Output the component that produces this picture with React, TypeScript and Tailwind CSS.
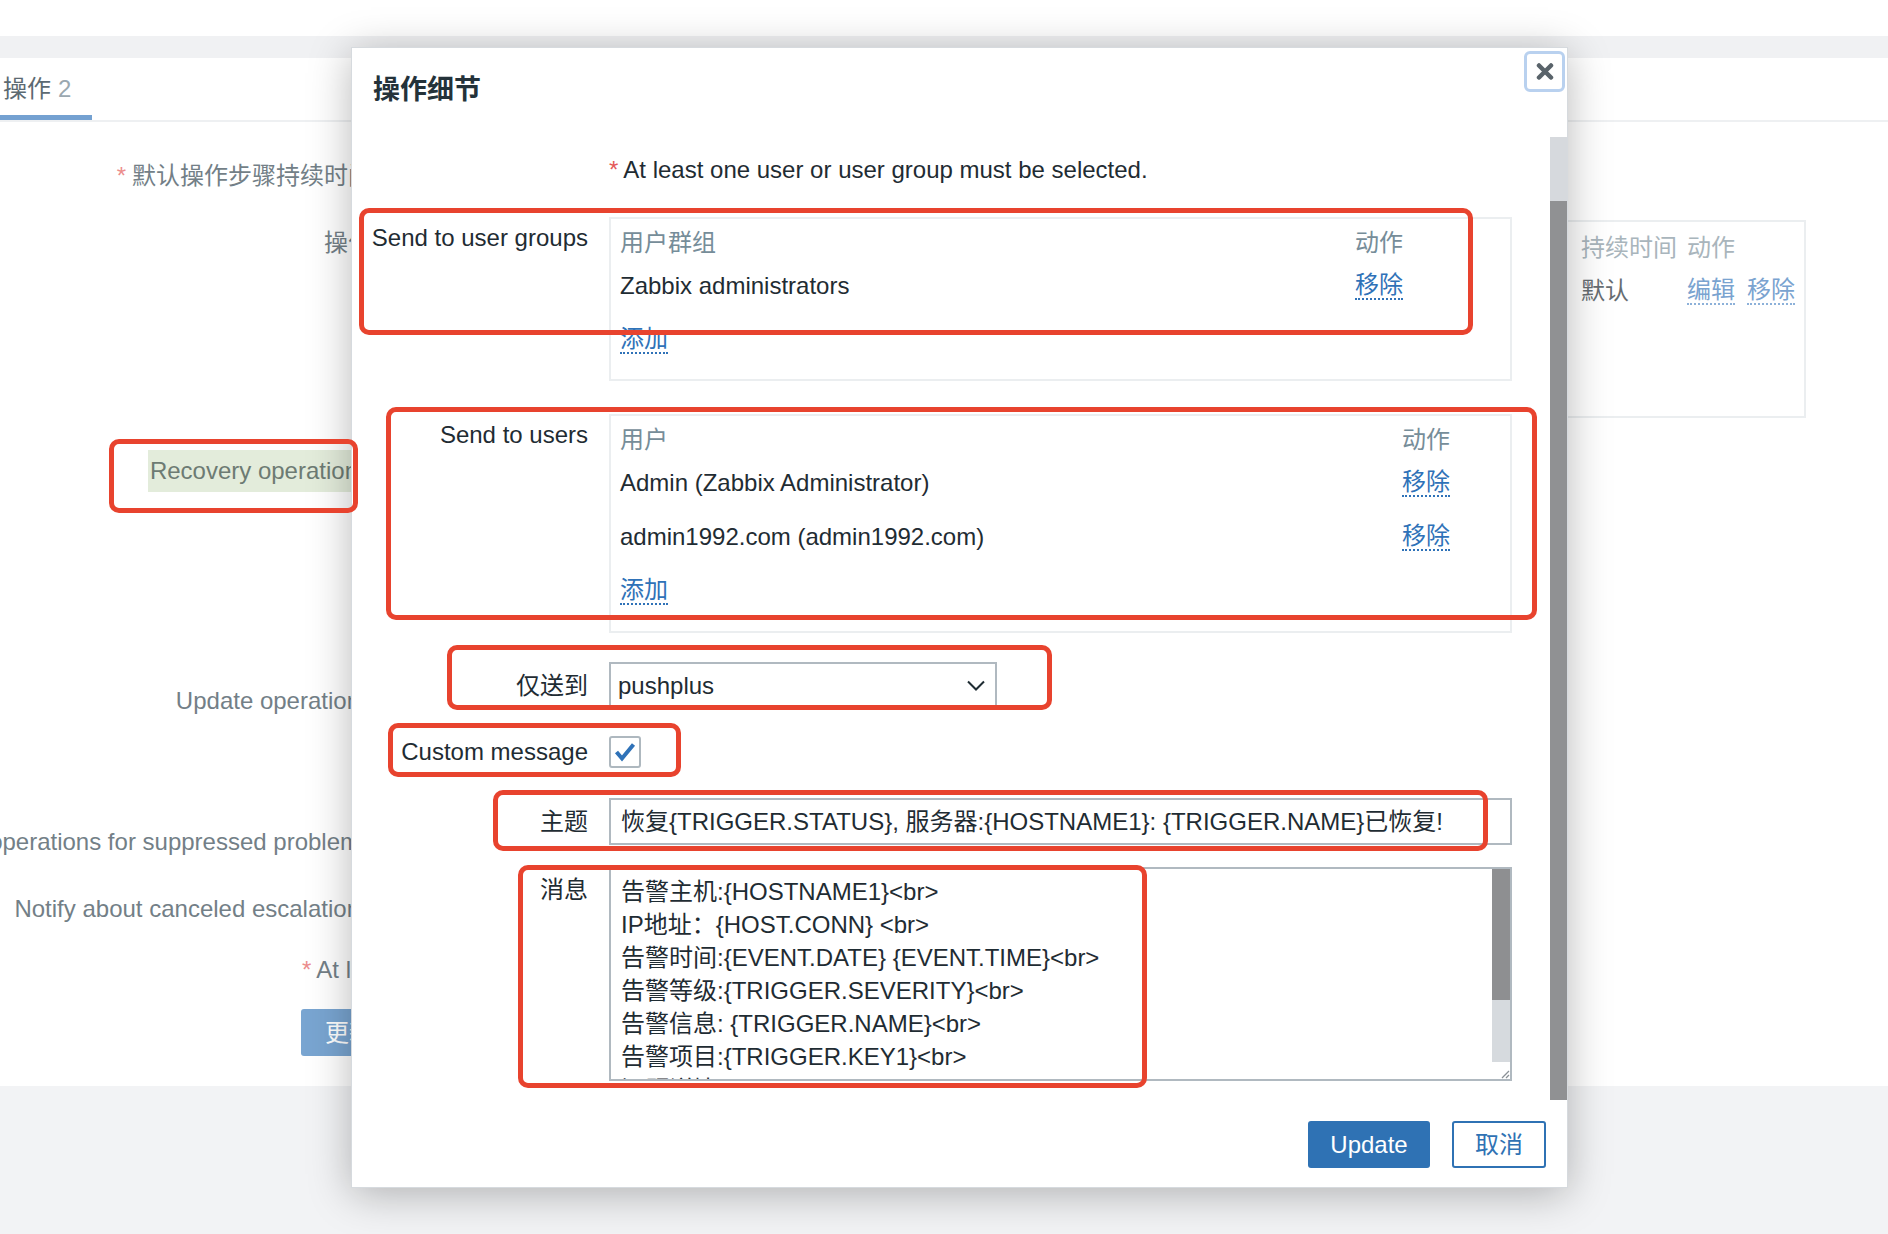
import type { ReactNode } from "react";

type Row = { name: string };

function DottedLink({ children, className = "" }: { children: ReactNode; className?: string }) {
  return (
    <span
      className={`inline-block border-b-2 border-dotted border-[#2f72b8] leading-[26px] text-[#2f72b8] ${className}`}
    >
      {children}
    </span>
  );
}

function FormRow({
  label,
  children,
  className = "",
  labelClass = "",
}: {
  label?: ReactNode;
  children: ReactNode;
  className?: string;
  labelClass?: string;
}) {
  return (
    <div className={`flex ${className}`}>
      <div className={`flex w-[216px] shrink-0 justify-end whitespace-nowrap ${labelClass}`}>{label}</div>
      <div className="ml-[21px] w-[903px]">{children}</div>
    </div>
  );
}

function UserTable({
  title,
  rows,
  nameWidth,
  bottomPad,
}: {
  title: string;
  rows: Row[];
  nameWidth: string;
  bottomPad: string;
}) {
  return (
    <div className={`border-2 border-[#ebeef0] px-[9px] pt-[7px] ${bottomPad}`}>
      <div className="flex h-[33px] items-center text-[#768d99]">
        <div className={nameWidth}>{title}</div>
        <div>动作</div>
      </div>
      {rows.map((row) => (
        <div key={row.name} className="flex h-[54px] items-center text-[#1f2c33]">
          <div className={nameWidth}>{row.name}</div>
          <DottedLink>移除</DottedLink>
        </div>
      ))}
      <div className="flex h-[54px] items-center">
        <DottedLink>添加</DottedLink>
      </div>
    </div>
  );
}

function Background() {
  return (
    <div className="flex h-full flex-col">
      <div className="h-[36px] shrink-0 bg-white" />
      <div className="h-[22px] shrink-0 bg-[#f0f1f3]" />
      <div className="h-[1028px] shrink-0 bg-white text-[#737f87]">
        <div className="flex h-[64px] border-b-2 border-[#eef0f2]">
          <div className="-ml-[18px] flex h-[62px] items-center whitespace-nowrap border-b-[5px] border-[#74a1d1] px-[21px] pt-[4px] text-[#5c6a72]">
            操作<span className="ml-[7px] text-[#9ba8b0]">2</span>
          </div>
        </div>

        <div className="flex flex-col">
          <div className="mt-[40px] flex w-[372px] justify-end whitespace-nowrap">
            <span className="mr-[6px] text-[#ec8d8d]">*</span>默认操作步骤持续时间
          </div>

          <div className="mt-[30px] flex">
            <div className="flex w-[372px] justify-end pt-[9px]">操作</div>
            <div className="ml-[20px] h-[198px] w-[1414px] border-2 border-[#ebeef0] pt-[12px]">
              <div className="flex justify-end">
                <div className="w-[106px] text-[#a9b5bc]">持续时间</div>
                <div className="w-[117px] text-[#a9b5bc]">动作</div>
              </div>
              <div className="mt-[15px] flex justify-end">
                <div className="w-[106px] text-[#666d72]">默认</div>
                <div className="flex w-[117px] gap-[12px]">
                  <span className="inline-block border-b-2 border-dotted border-[#8db1d9] leading-[26px] text-[#7aa3d0]">编辑</span>
                  <span className="inline-block border-b-2 border-dotted border-[#8db1d9] leading-[26px] text-[#7aa3d0]">移除</span>
                </div>
              </div>
            </div>
          </div>

          <div className="mt-[32px] flex w-[372px] justify-end whitespace-nowrap">
            <span className="bg-[#e3ecdb] px-[2px] py-[7px] text-[#6d7b73]">Recovery operations</span>
          </div>

          <div className="mt-[195px] flex w-[372px] justify-end whitespace-nowrap">Update operations</div>
          <div className="mt-[113px] flex w-[372px] justify-end whitespace-nowrap">
            Pause operations for suppressed problems
          </div>
          <div className="mt-[39px] flex w-[372px] justify-end whitespace-nowrap">
            Notify about canceled escalations
          </div>
          <div className="mt-[33px] whitespace-nowrap pl-[302px]">
            <span className="mr-[5px] text-[#ec8d8d]">*</span>At least one operation must exist.
          </div>
          <div className="mt-[25px] pl-[301px]">
            <button type="button" className="h-[47px] rounded-[3px] bg-[#79a5d1] px-[24px] text-white">
              更新
            </button>
          </div>
        </div>
      </div>
      <div className="flex-1 bg-[#f2f3f5]" />
    </div>
  );
}

function OperationModal() {
  return (
    <div className="absolute left-[351px] top-[47px] flex h-[1141px] w-[1217px] flex-col border border-[#d6dade] bg-white text-[#1f2c33] shadow-[0_6px_40px_rgba(0,0,0,0.28)]">
      <div className="relative h-[89px] shrink-0">
        <h2 className="pl-[21px] pt-[26px] text-[27px] font-bold leading-[32px] text-[#24323a]">操作细节</h2>
        <button
          type="button"
          className="absolute right-[2px] top-[3px] flex h-[41px] w-[41px] items-center justify-center rounded-[6px] border-[3px] border-[#b9d1ef]"
        >
          <svg width="18" height="17" viewBox="0 0 18 17">
            <path d="M3 2.5 L15 14.5 M15 2.5 L3 14.5" stroke="#59636a" strokeWidth="4.5" strokeLinecap="round" />
          </svg>
        </button>
      </div>

      <div className="flex h-[963px] shrink-0">
        <div className="flex flex-1 flex-col overflow-hidden pl-[20px] pt-[19px]">
          <FormRow>
            <span className="text-[#e45959]">*</span>
            <span className="ml-[5px]">At least one user or user group must be selected.</span>
          </FormRow>

          <FormRow className="mt-[33px]" labelClass="pt-[7px]" label="Send to user groups">
            <UserTable
              title="用户群组"
              nameWidth="w-[735px]"
              bottomPad="pb-[12px]"
              rows={[{ name: "Zabbix administrators" }]}
            />
          </FormRow>

          <FormRow className="mt-[33px]" labelClass="pt-[7px]" label="Send to users">
            <UserTable
              title="用户"
              nameWidth="w-[782px]"
              bottomPad="pb-[13px]"
              rows={[{ name: "Admin (Zabbix Administrator)" }, { name: "admin1992.com (admin1992.com)" }]}
            />
          </FormRow>

          <FormRow className="mt-[29px]" labelClass="items-center" label="仅送到">
            <div className="flex h-[47px] w-[388px] items-center justify-between border-2 border-[#b0b9c0] pl-[7px] pr-[10px]">
              <span>pushplus</span>
              <svg width="18" height="11" viewBox="0 0 18 11">
                <path d="M1 1.5 L9 9.5 L17 1.5" fill="none" stroke="#1f2c33" strokeWidth="2" />
              </svg>
            </div>
          </FormRow>

          <FormRow className="mt-[26px] h-[34px]" labelClass="items-center" label="Custom message">
            <div className="mt-[1px] flex h-[32px] w-[32px] items-center justify-center rounded-[3px] border-2 border-[#aeb8bf]">
              <svg width="22" height="20" viewBox="0 0 22 20">
                <path d="M2.5 10 L8 16.5 L19.5 2.5" fill="none" stroke="#2f72b8" strokeWidth="4" />
              </svg>
            </div>
          </FormRow>

          <FormRow className="mt-[29px]" labelClass="items-center" label="主题">
            <div className="flex h-[47px] items-center whitespace-nowrap border-2 border-[#b0b9c0] pl-[10px]">
              恢复{"{TRIGGER.STATUS}"}, 服务器:{"{HOSTNAME1}"}: {"{TRIGGER.NAME}"}已恢复!
            </div>
          </FormRow>

          <FormRow className="mt-[22px]" labelClass="pt-[9px]" label="消息">
            <div className="flex h-[214px] border-2 border-[#b0b9c0]">
              <div className="flex-1 overflow-hidden whitespace-nowrap pl-[10px] pt-[6px] leading-[33px]">
                <div>告警主机:{"{HOSTNAME1}"}&lt;br&gt;</div>
                <div>IP地址：{"{HOST.CONN}"} &lt;br&gt;</div>
                <div>告警时间:{"{EVENT.DATE}"} {"{EVENT.TIME}"}&lt;br&gt;</div>
                <div>告警等级:{"{TRIGGER.SEVERITY}"}&lt;br&gt;</div>
                <div>告警信息: {"{TRIGGER.NAME}"}&lt;br&gt;</div>
                <div>告警项目:{"{TRIGGER.KEY1}"}&lt;br&gt;</div>
                <div>问题详情:{"{ITEM.NAME}"}:{"{ITEM.VALUE}"}&lt;br&gt;</div>
              </div>
              <div className="flex w-[18px] flex-col">
                <div className="h-[131px] bg-[#8e8f91]" />
                <div className="flex-1 bg-[#d6dade]" />
                <div className="flex h-[17px] items-end justify-end bg-white">
                  <svg width="12" height="12" viewBox="0 0 12 12">
                    <path d="M11 4 L4 11 M11 8 L8 11" stroke="#8a9096" strokeWidth="1.3" />
                  </svg>
                </div>
              </div>
            </div>
          </FormRow>
        </div>
        <div className="flex w-[17px] flex-col">
          <div className="h-[64px] bg-[#d6d9dd]" />
          <div className="flex-1 bg-[#909193]" />
        </div>
      </div>

      <div className="flex h-[89px] shrink-0 items-center justify-end gap-[22px] pr-[21px]">
        <button type="button" className="h-[47px] w-[122px] rounded-[3px] bg-[#2f72b4] text-white">
          Update
        </button>
        <button type="button" className="h-[47px] w-[94px] rounded-[3px] border-2 border-[#2f72b4] text-[#2f72b4]">
          取消
        </button>
      </div>
    </div>
  );
}

const annotation = "pointer-events-none absolute rounded-[10px] border-[5px] border-[#e8432e]";

export default function App() {
  return (
    <div className="relative h-[1234px] w-[1888px] overflow-hidden bg-white font-['Liberation_Sans','Noto_Sans_CJK_SC',sans-serif] text-[24px] leading-[28px]">
      <Background />
      <OperationModal />

      <div className={`${annotation} left-[359px] top-[208px] h-[127px] w-[1114px]`} />
      <div className={`${annotation} left-[109px] top-[439px] h-[74px] w-[249px]`} />
      <div className={`${annotation} left-[386px] top-[407px] h-[213px] w-[1151px]`} />
      <div className={`${annotation} left-[447px] top-[645px] h-[65px] w-[605px]`} />
      <div className={`${annotation} left-[388px] top-[723px] h-[54px] w-[293px]`} />
      <div className={`${annotation} left-[493px] top-[790px] h-[61px] w-[995px]`} />
      <div className={`${annotation} left-[518px] top-[865px] h-[223px] w-[629px]`} />
    </div>
  );
}
